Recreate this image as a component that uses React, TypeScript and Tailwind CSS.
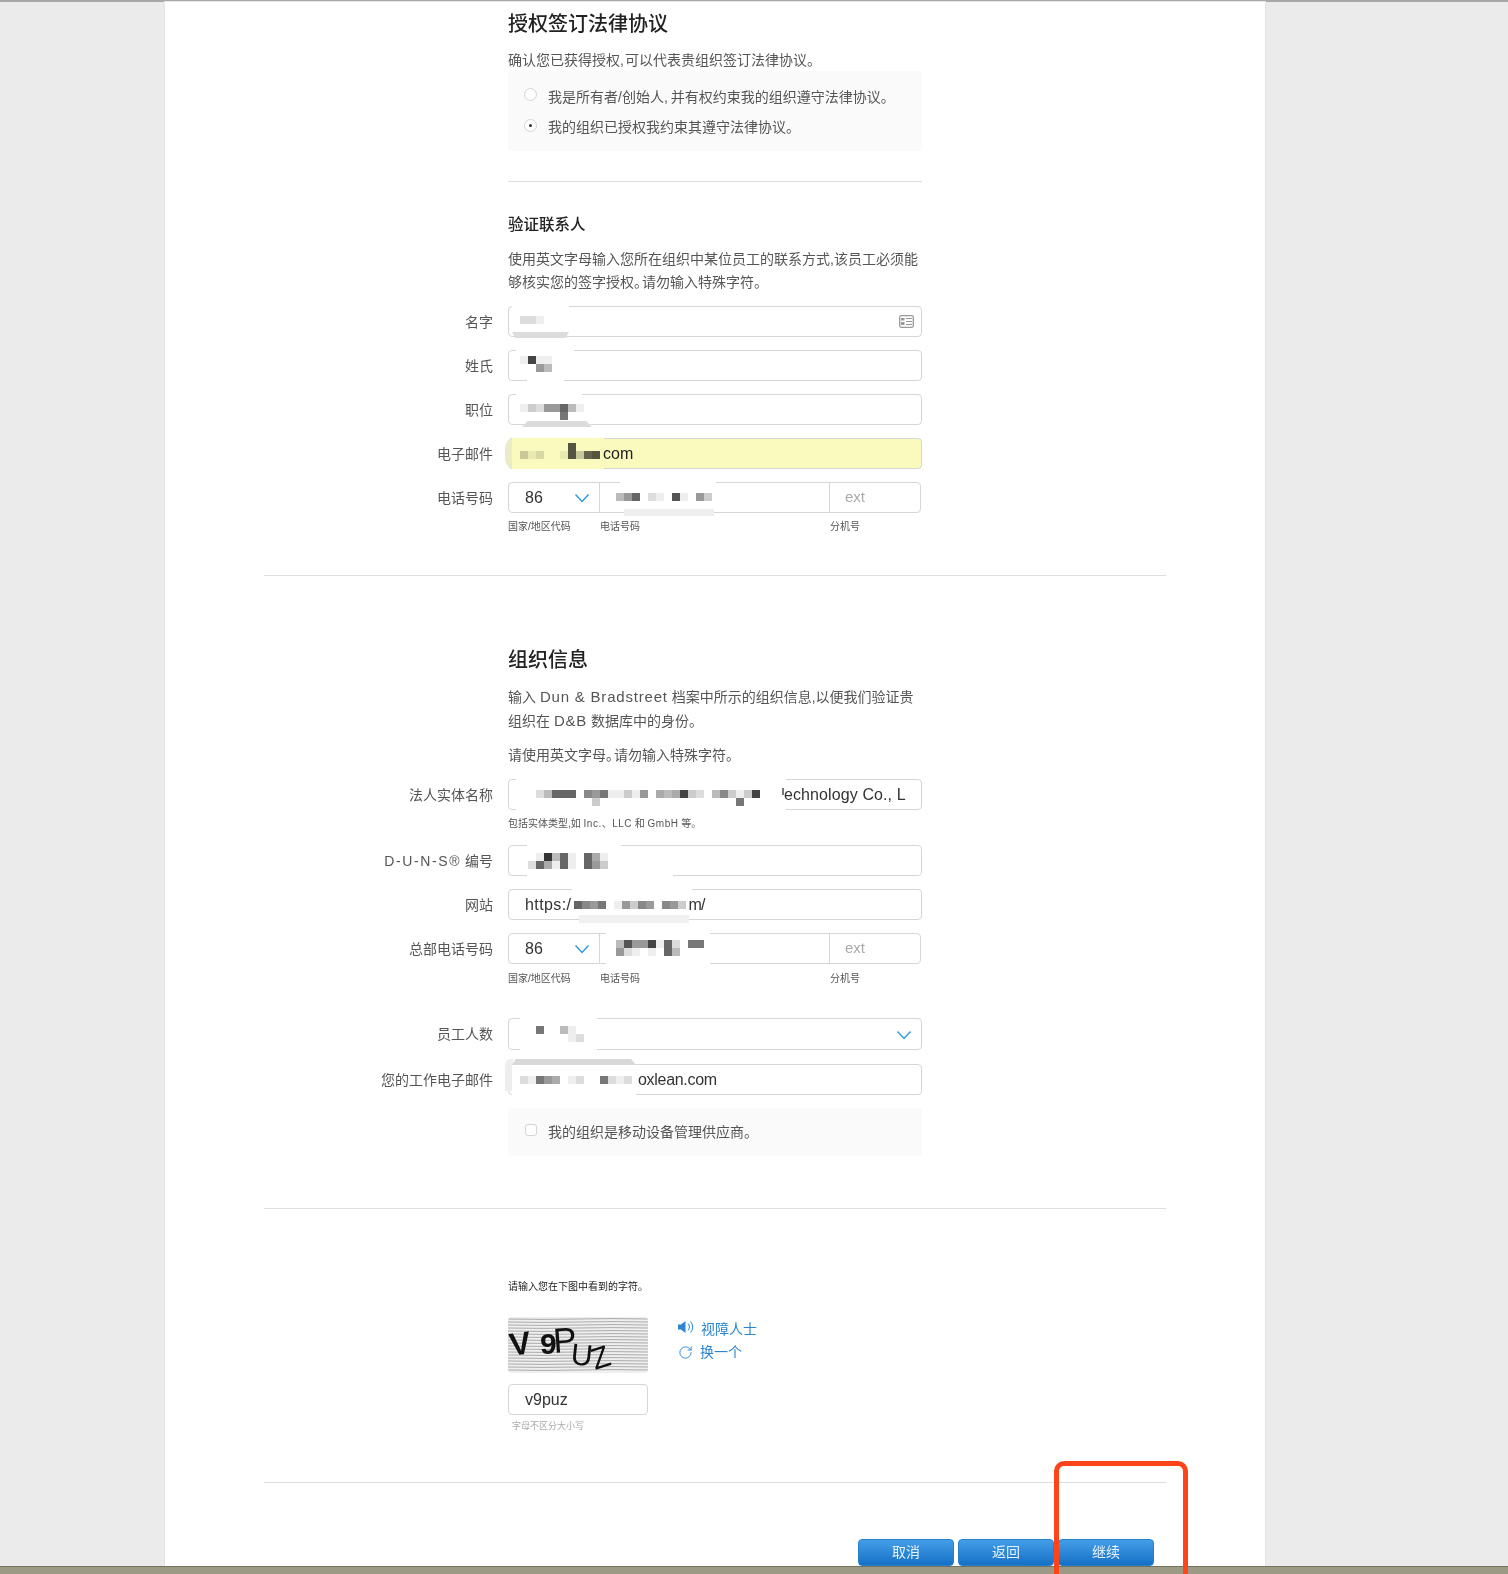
import type { ReactNode } from "react";
import { RotateCw } from "lucide-react";

// blurred-out input values: one hex digit per 8px cell, blank = see through
function Mosaic({ rows, className = "" }: { rows: string[]; className?: string }) {
  return (
    <div className={`relative z-10 shrink-0 ${className}`}>
      {rows.map((row, i) => (
        <div key={i} className="flex h-[8px]">
          {row.split("").map((c, j) => (
            <span
              key={j}
              className="h-[8px] w-[8px]"
              style={{ backgroundColor: c === " " ? "transparent" : `#${c}${c}${c}` }}
            />
          ))}
        </div>
      ))}
    </div>
  );
}

function Chevron() {
  return (
    <svg width="16" height="10" viewBox="0 0 16 10" fill="none" stroke="#2b9ad8" strokeWidth="1.4">
      <path d="M1.5 1.5 8 8.5l6.5-7" />
    </svg>
  );
}

function Field({ label, children, className = "h-[31px]" }: { label: ReactNode; children: ReactNode; className?: string }) {
  return (
    <div className="flex items-center">
      <div className="w-[229px] text-right text-[14px] leading-[20px] text-[#555]">{label}</div>
      <div className={`relative ml-[15px] flex w-[414px] items-center rounded-[4px] border border-[#d6d6d6] pl-[11px] text-[16px] text-[#333] ${className}`}>
        {children}
      </div>
    </div>
  );
}

function PhoneField({ label, overlays, number, hintGap }: { label: string; overlays: ReactNode; number: ReactNode; hintGap: string }) {
  return (
    <div>
      <div className="flex items-center">
        <div className="w-[229px] text-right text-[14px] leading-[20px] text-[#555]">{label}</div>
        <div className="relative ml-[15px] flex h-[31px] w-[413px] rounded-[4px] border border-[#d6d6d6] text-[16px] text-[#333]">
          <div className="flex w-[91px] items-center justify-between border-r border-[#d6d6d6] pl-[16px] pr-[9px]">
            86
            <Chevron />
          </div>
          <div className="relative flex w-[230px] items-center border-r border-[#d6d6d6] pl-[16px]">
            {overlays}
            {number}
          </div>
          <div className="flex flex-1 items-center pl-[15px] text-[15px] text-[#aaa]">ext</div>
        </div>
      </div>
      <div className={`ml-[244px] flex text-[10px] leading-[14px] text-[#555] ${hintGap}`}>
        <span className="w-[92px]">国家/地区代码</span>
        <span className="w-[230px]">电话号码</span>
        <span>分机号</span>
      </div>
    </div>
  );
}

function Captcha() {
  const lines = [];
  for (let y = 2; y < 56; y += 3) lines.push(y);
  return (
    <svg width="140" height="56" viewBox="0 0 140 56" className="rounded-[4px]">
      <rect width="140" height="56" fill="#efefef" />
      {lines.map((y) => (
        <path key={y} d={`M0 ${y} q35 0.8 70 0 t70 0`} stroke="#aaa" strokeWidth="1" fill="none" />
      ))}
      <g fontFamily="'Liberation Sans', sans-serif" fill="#111">
        <text x="3" y="39" fontSize="32" fontWeight="700" transform="rotate(-8 3 39)">V</text>
        <text x="32" y="37" fontSize="30" fontWeight="700">9</text>
        <text x="46" y="36" fontSize="35" transform="rotate(-4 46 36)">P</text>
        <text x="62" y="47" fontSize="30" transform="rotate(6 62 47)">U</text>
        <text x="87" y="53" fontSize="30" transform="rotate(-18 87 53)">Z</text>
      </g>
    </svg>
  );
}

function BlueButton({ label }: { label: string }) {
  return (
    <button className="h-[27px] w-[96px] rounded-[4px] border border-[#2a7fc9] bg-gradient-to-b from-[#439ee8] to-[#1470c6] text-[14px] text-[#e6f2fb]">
      {label}
    </button>
  );
}

// the source font sets 。 narrow, so pull the following text back
function Stop() {
  return <span className="tracking-[-6px]">。</span>;
}

export default function App() {
  return (
    <div className="relative flex h-[1574px] flex-col overflow-hidden bg-[#ebebeb] font-['Liberation_Sans','Noto_Sans_CJK_SC',sans-serif]">
      <div className="h-[2px] bg-[#a8a8a8]" />

      <main className="ml-[165px] h-[1564px] w-[1100px] bg-white px-[99px] pt-[8px] shadow-[0_0_0_1px_#e4e4e4]">
        {/* Legal agreement */}
        <div className="ml-[244px] w-[414px]">
          <h2 className="text-[20px] font-medium leading-[28px] text-[#222]">授权签订法律协议</h2>
          <p className="mt-[12px] text-[14px] leading-[20px] text-[#555]">
            确认您已获得授权<span className="tracking-[1px]">,</span>可以代表贵组织签订法律协议。
          </p>
          <div className="mt-[1px] rounded-[3px] bg-[#fafafa] px-[16px] pb-[9px] pt-[11px] text-[14px] text-[#555]">
            <label className="flex h-[30px] items-center gap-[11px]">
              <span className="h-[13px] w-[13px] -translate-y-[3px] rounded-full border border-[#d4d4d4] bg-white" />
              <span>
                我是所有者/创始人<span className="tracking-[3px]">,</span>并有权约束我的组织遵守法律协议。
              </span>
            </label>
            <label className="flex h-[30px] items-center gap-[11px]">
              <span className="flex h-[13px] w-[13px] -translate-y-[2px] items-center justify-center rounded-full border border-[#d4d4d4] bg-white">
                <span className="h-[3px] w-[3px] rounded-full bg-[#333]" />
              </span>
              我的组织已授权我约束其遵守法律协议。
            </label>
          </div>
          <div className="mt-[30px] h-px bg-[#dedede]" />

          <h3 className="mt-[31px] text-[15.5px] font-medium leading-[24px] text-[#222]">验证联系人</h3>
          <p className="mt-[11px] text-[14px] leading-[23px] text-[#555]">
            使用英文字母输入您所在组织中某位员工的联系方式,该员工必须能够核实您的签字授权<Stop />请勿输入特殊字符。
          </p>
        </div>

        {/* Contact fields */}
        <div className="mt-[12px] flex flex-col gap-[13px]">
          <Field label="名字">
            <div className="absolute -top-[2px] left-[3px] h-[30px] w-[57px] bg-white" />
            <div className="absolute -bottom-[2px] left-[3px] h-[6px] w-[57px] bg-[#dcdcdc] [clip-path:polygon(0_0,100%_0,94%_100%,6%_100%)]" />
            <Mosaic rows={["dde"]} className="-translate-y-[2px]" />
            <svg width="15" height="13" viewBox="0 0 15 13" className="absolute right-[7px] top-[8px]" fill="none">
              <rect x="0.7" y="0.7" width="13.6" height="11.6" rx="1.5" stroke="#999" strokeWidth="1.3" />
              <rect x="2" y="3" width="3.5" height="2.5" fill="#999" />
              <rect x="2" y="7" width="3.5" height="3" fill="#999" />
              <path d="M7 3.5h6M7 6.5h6M7 9.5h6" stroke="#999" strokeWidth="1.2" />
            </svg>
          </Field>
          <Field label="姓氏">
            <div className="absolute -top-[2px] left-[7px] h-[20px] w-[58px] bg-white" />
            <div className="absolute -bottom-[3px] left-[18px] h-[14px] w-[37px] bg-white" />
            <Mosaic rows={["e4ee", "  9b"]} className="-translate-y-[2px]" />
          </Field>
          <Field label="职位">
            <div className="absolute -top-[2px] left-[7px] h-[24px] w-[66px] bg-white" />
            <div className="absolute -bottom-[3px] left-[13px] h-[6px] w-[70px] bg-[#dcdcdc] [clip-path:polygon(8%_0,92%_0,100%_100%,0_100%)]" />
            <Mosaic rows={["ecd996be", "     7  "]} className="translate-y-[2px]" />
          </Field>
          <Field label="电子邮件" className="h-[31px] bg-[#fafabf]">
            <div className="absolute -bottom-[1px] -left-[4px] -top-[1px] w-[10px] rounded-l-full bg-[#ecebc8]" />
            <div className="absolute -bottom-[1px] left-[3px] -top-[1px] w-[92px] bg-[#fafabf]" />
            <Mosaic rows={["      5   ", "ced fe5c65"]} className="-translate-y-[3px] mix-blend-multiply" />
            <span className="relative z-10 ml-[3px] text-[#222]">com</span>
          </Field>
          <PhoneField
            label="电话号码"
            hintGap="mt-[7px]"
            overlays={
              <>
                <div className="absolute -top-[2px] left-[20px] h-[24px] w-[96px] bg-white" />
                <div className="absolute -bottom-[4px] left-[24px] h-[7px] w-[90px] bg-[#eeeeee]" />
              </>
            }
            number={<Mosaic rows={["b96 de 5e 9c"]} className="-translate-y-[1px]" />}
          />
        </div>

        <div className="mt-[41px] h-px bg-[#dedede]" />

        {/* Organization info */}
        <div className="ml-[244px] w-[414px]">
          <h2 className="mt-[70px] text-[20px] font-medium leading-[28px] text-[#222]">组织信息</h2>
          <p className="mt-[11px] text-[14px] leading-[23px] text-[#555]">
            输入 <span className="text-[15px] tracking-[0.8px]">Dun &amp; Bradstreet</span> 档案中所示的组织信息,以便我们验证贵组织在 <span className="text-[15px] tracking-[0.8px]">D&amp;B</span> 数据库中的身份。
          </p>
          <p className="mt-[11px] text-[14px] leading-[23px] text-[#555]">请使用英文字母<Stop />请勿输入特殊字符。</p>
        </div>

        <div className="mt-[12px]">
          <Field label="法人实体名称">
            <div className="absolute -top-[2px] left-[7px] h-[38px] w-[270px] bg-white" />
            <Mosaic
              rows={["f db666 897eece9 aba4cdfb8cec4 ", "         c                 7 "]}
              className="translate-y-[3px]"
            />
            <span className="relative z-10 ml-[14px] h-[7px] w-[2px] -translate-y-[3px] bg-[#777]" />
            <span className="relative z-10 tracking-[0.1px]">echnology Co., L</span>
          </Field>
          <div className="ml-[244px] mt-[7px] text-[10px] leading-[14px] text-[#555]">
            包括实体类型,如 <span className="tracking-[0.5px]">Inc.、LLC</span> 和 <span className="tracking-[0.5px]">GmbH</span> 等。
          </div>
        </div>

        <div className="mt-[14px] flex flex-col gap-[13px]">
          <Field label={<><span className="tracking-[1.6px]">D-U-N-S®</span> 编号</>}>
            <div className="absolute -top-[2px] left-[18px] h-[20px] w-[94px] bg-white" />
            <div className="absolute -bottom-[2px] left-[18px] h-[12px] w-[146px] bg-white" />
            <Mosaic rows={[" e3b6e 6ae", "d6ae6e 69c"]} className="ml-[8px]" />
          </Field>
          <Field label="网站">
            <div className="absolute -top-[2px] left-[63px] h-[20px] w-[120px] bg-white" />
            <div className="absolute -bottom-[4px] left-[70px] h-[8px] w-[110px] bg-[#f0f0f0]" />
            <span className="relative z-10 ml-[5px] tracking-[0.4px]">https:/</span>
            <Mosaic rows={["6897 e9c89 89c"]} className="ml-[3px]" />
            <span className="relative z-10 ml-[2px] tracking-[-0.6px]">m/</span>
          </Field>
          <PhoneField
            label="总部电话号码"
            hintGap="mt-[8px]"
            overlays={
              <>
                <div className="absolute -top-[2px] left-[6px] h-[35px] w-[104px] bg-white" />
              </>
            }
            number={<Mosaic rows={["b5994e6d 77", "9defe 6b   "]} className="-translate-y-[1px]" />}
          />
        </div>

        <div className="mt-[32px] flex flex-col">
          <Field label="员工人数" className="h-[32px]">
            <div className="absolute -top-[2px] left-[11px] h-[36px] w-[77px] bg-white" />
            <Mosaic rows={["f 7  be ", "      ed"]} />
            <div className="absolute right-[9px] top-[11px]">
              <Chevron />
            </div>
          </Field>
          <div className="mt-[14px]">
            <Field label="您的工作电子邮件">
              <div className="absolute -left-[4px] top-[-6px] h-[32px] w-[8px] rounded-tl-[6px] bg-[#eeeeee]" />
              <div className="absolute -top-[6px] left-[3px] h-[6px] w-[124px] bg-[#d8d8d8] [clip-path:polygon(3%_0,96%_0,100%_100%,0_100%)]" />
              <div className="absolute -bottom-[1px] left-[3px] top-0 w-[124px] bg-white" />
              <Mosaic rows={["de79a ed  7ded"]} />
              <span className="relative z-10 ml-[6px] tracking-[-0.3px]">oxlean.com</span>
            </Field>
          </div>
          <div className="ml-[244px] mt-[13px] flex h-[48px] w-[414px] items-center gap-[11px] rounded-[3px] bg-[#fafafa] px-[17px] text-[14px] text-[#555]">
            <span className="h-[12px] w-[12px] -translate-y-[2px] rounded-[3px] border border-[#d4d4d4] bg-white" />
            我的组织是移动设备管理供应商。
          </div>
        </div>

        <div className="mt-[52px] h-px bg-[#dedede]" />

        {/* Captcha */}
        <div className="ml-[244px]">
          <div className="mt-[71px] text-[10px] leading-[14px] text-[#222]">请输入您在下图中看到的字符。</div>
          <div className="mt-[23px] flex">
            <div>
              <Captcha />
              <div className="mt-[11px] flex h-[31px] w-[140px] items-center rounded-[4px] border border-[#d6d6d6] pl-[16px] text-[16px] text-[#333]">
                v9puz
              </div>
              <div className="ml-[4px] mt-[4px] text-[9px] leading-[14px] text-[#aaa]">字母不区分大小写</div>
            </div>
            <div className="ml-[30px] mt-[1px] flex h-fit flex-col text-[14px] text-[#2c86cf]">
              <div className="flex h-[23px] items-center gap-[7px]">
                <svg width="16" height="14" viewBox="0 0 16 14" fill="none" className="-translate-y-[3px]">
                  <path d="M0 4.5h3L7.5 1v12L3 9.5H0z" fill="#2c86cf" />
                  <path d="M10 3.5a5 5 0 0 1 0 7M12.5 1.5a8 8 0 0 1 0 11" stroke="#2c86cf" strokeWidth="1" />
                </svg>
                视障人士
              </div>
              <div className="flex h-[23px] items-center gap-[7px]">
                <RotateCw size={15} strokeWidth={1.5} color="#2c86cf" />
                换一个
              </div>
            </div>
          </div>
        </div>

        <div className="mt-[49px] h-px bg-[#dedede]" />

        <div className="mr-[12px] mt-[56px] flex justify-end gap-[4px]">
          <BlueButton label="取消" />
          <BlueButton label="返回" />
          <BlueButton label="继续" />
        </div>
      </main>

      <div className="h-[8px] border-t border-[#73735f] bg-[#9c9a84]" />

      {/* red annotation box drawn over the screenshot */}
      <div className="absolute left-[1054px] top-[1461px] h-[130px] w-[134px] rounded-t-[10px] border-[5px] border-[#ff4419]" />
    </div>
  );
}
